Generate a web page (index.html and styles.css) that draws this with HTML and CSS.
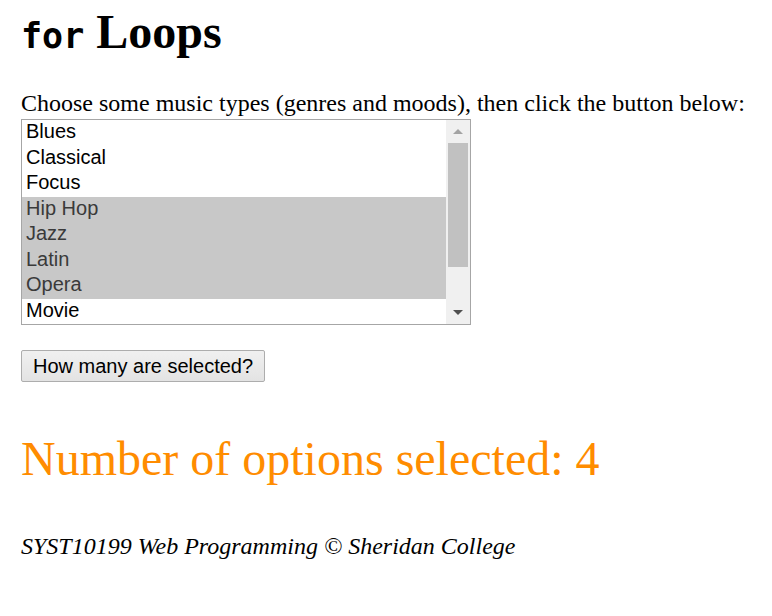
FILE: index.html
```html
<!DOCTYPE html>
<html>
<head>
<meta charset="utf-8">
<link rel="stylesheet" href="styles.css">
</head>
<body>
<h1 class="title"><code class="kw">for</code> Loops</h1>
<p class="intro">Choose some music types (genres and moods), then click the button below:</p>
<div class="listbox">
  <div class="options">
    <div class="opt">Blues</div>
    <div class="opt">Classical</div>
    <div class="opt">Focus</div>
    <div class="opt sel">Hip Hop</div>
    <div class="opt sel">Jazz</div>
    <div class="opt sel">Latin</div>
    <div class="opt sel">Opera</div>
    <div class="opt">Movie</div>
  </div>
  <div class="scrollbar">
    <div class="arrow-up"></div>
    <div class="track"><div class="thumb"></div></div>
    <div class="arrow-down"></div>
  </div>
</div>
<button class="btn">How many are selected?</button>
<div class="result">Number of options selected: 4</div>
<footer class="foot">SYST10199 Web Programming © Sheridan College</footer>
</body>
</html>
```
FILE: styles.css
```css
html, body { background: #fff; }
body {
  margin: 0;
  padding: 0 21px;
  font-family: "Liberation Serif", "Times New Roman", serif;
  font-size: 24px;
  color: #000;
}
.title {
  margin: 4.5px 0 0;
  font-size: 48px;
  line-height: 53px;
  font-weight: bold;
}
.kw {
  font-family: "DejaVu Sans Mono", monospace;
  font-size: 35px;
  font-weight: bold;
  line-height: 0;
}
.intro {
  margin: 32px 0 0;
  line-height: 27px;
}
.listbox {
  margin-top: 2.5px;
  width: 450px;
  height: 206px;
  box-sizing: border-box;
  border: 1px solid #a6a6a6;
  display: flex;
  background: #fff;
}
.options {
  flex: 1;
  display: flex;
  flex-direction: column;
}
.opt {
  height: 25.5px;
  line-height: 22px;
  padding: 0 4px;
  font-family: "Liberation Sans", Arial, sans-serif;
  font-size: 20px;
  color: #000;
  box-sizing: border-box;
}
.opt.sel {
  background: #c8c8c8;
  color: #3a3a3a;
}
.scrollbar {
  width: 24px;
  background: #f0f0f0;
  display: flex;
  flex-direction: column;
  align-items: center;
}
.arrow-up, .arrow-down {
  height: 23px;
  width: 24px;
  display: flex;
  align-items: center;
  justify-content: center;
}
.arrow-up::before {
  content: "";
  border-left: 5px solid transparent;
  border-right: 5px solid transparent;
  border-bottom: 5px solid #a3a3a3;
}
.arrow-down::before {
  content: "";
  border-left: 5px solid transparent;
  border-right: 5px solid transparent;
  border-top: 5px solid #505050;
}
.track {
  flex: 1;
  width: 100%;
  padding: 0 2px 0 1.5px;
  box-sizing: border-box;
}
.thumb {
  height: 124px;
  background: #c1c1c1;
}
.btn {
  display: block;
  margin: 25px 0 0;
  height: 32px;
  padding: 0 11px;
  font-family: "Liberation Sans", Arial, sans-serif;
  font-size: 20px;
  color: #000;
  background: linear-gradient(#f0f0f0, #e3e3e3);
  border: 1px solid #adadad;
  border-radius: 2px;
}
.result {
  margin-top: 49px;
  font-size: 48px;
  line-height: 55px;
  color: #ff8c00;
}
.foot {
  display: block;
  margin-top: 47px;
  font-style: italic;
  line-height: 27px;
}
```
